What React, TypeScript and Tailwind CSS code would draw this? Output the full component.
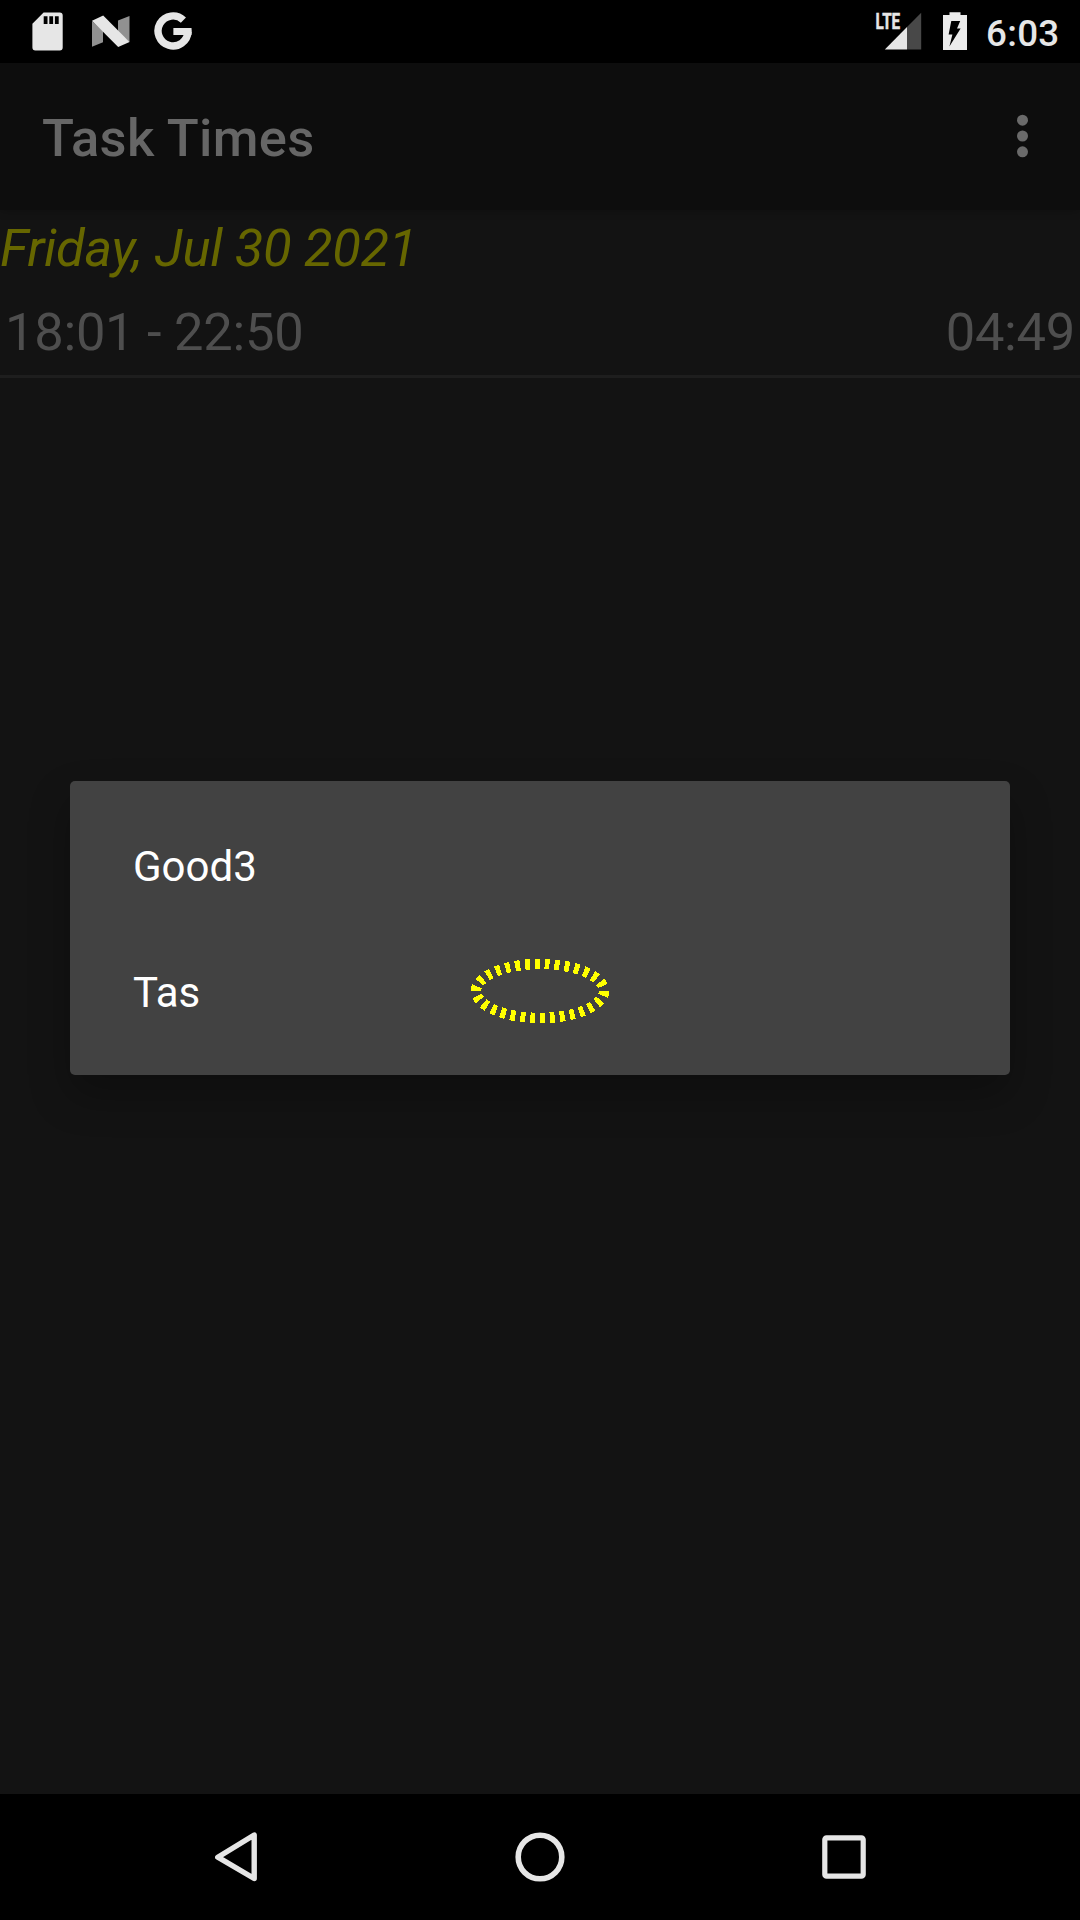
import React from "react";

const SdCardIcon = () => (
  <svg className="h-[63px] w-[32px]" viewBox="32 0 32 63">
    <path d="M43.6 12.4H59.7a3 3 0 0 1 3 3V47.5a3 3 0 0 1-3 3H35.4a3 3 0 0 1-3-3V23.8Z" fill="#e6e6e6" />
    <path d="M43.7 16.3h3.8v7.7h-3.8zM49.3 16.3h3.8v7.7h-3.8zM54.9 16.3h3.8v7.7h-3.8z" fill="#000" />
  </svg>
);

const NougatIcon = () => (
  <svg className="h-[63px] w-[40px]" viewBox="91 0 40 63">
    <path d="M92 21 103 31V42.2L92 46.8ZM118 20.4 129.5 15.9V42L118 34Z" fill="#919191" />
    <path d="M92 20.8 103.2 15.6 129.5 42 118.2 47Z" fill="#e6e6e6" />
  </svg>
);

const GoogleIcon = () => (
  <svg className="h-[63px] w-[40px]" viewBox="154 0 40 63">
    <path d="M183.4 20.1A15 15 0 1 0 188 31.7" fill="none" stroke="#e6e6e6" strokeWidth="7.4" />
    <path d="M173.4 28H191.5Q192 31 191.5 35H173.4Z" fill="#e6e6e6" />
  </svg>
);

const SignalIcon = () => (
  <svg className="h-[63px] w-[48px]" viewBox="875 0 48 63">
    <path d="M907 27V49.5H921.2V12.8Z" fill="#484848" />
    <path d="M884.8 49.5 907 27V49.5Z" fill="#e6e6e6" />
    <text x="875.6" y="29" textLength="24.6" lengthAdjust="spacingAndGlyphs" fill="#e6e6e6" stroke="#e6e6e6" strokeWidth="0.5" className="font-['Roboto'] text-[22px] font-bold">
      LTE
    </text>
  </svg>
);

const BatteryIcon = () => (
  <svg className="h-[63px] w-[26px]" viewBox="942 0 26 63">
    <path d="M943 15H949.5V12.2H960.5V15H967V50H943Z" fill="#ebebeb" />
    <path d="M951.3 21H960.2L957 28.6H960.6L949.4 46.6L952.4 34.6H948.6Z" fill="#000" />
  </svg>
);

const StatusBar = () => (
  <header className="flex h-[63px] items-center bg-black pl-[32px] pr-[21px]">
    <SdCardIcon />
    <div className="ml-[27px]"><NougatIcon /></div>
    <div className="ml-[23px]"><GoogleIcon /></div>
    <div className="ml-auto"><SignalIcon /></div>
    <div className="ml-[19px]"><BatteryIcon /></div>
    <span className="ml-[18px] mt-[5px] w-[73px] text-[36.75px] font-medium leading-[44px] tracking-[0.3px] text-[#e6e6e6]">6:03</span>
  </header>
);

const AppBar = () => (
  <div className="relative flex h-[147px] items-center justify-between bg-[#0d0d0d] pl-[42px] pr-[52px] shadow-[0_2px_8px_rgba(0,0,0,0.2)]">
    <h1 className="mt-[3px] text-[52.5px] font-medium leading-[62px] tracking-[0.33px] text-[#666666]">Task Times</h1>
    <svg className="mb-[1px] h-[44px] w-[11px]" viewBox="0 0 11 44" fill="#6a6a6a">
      <circle cx="5.5" cy="6.2" r="5.5" />
      <circle cx="5.5" cy="22" r="5.5" />
      <circle cx="5.5" cy="37.8" r="5.5" />
    </svg>
  </div>
);

const choices = ["Good3", "Tas"];

const ChoiceDialog = () => (
  <div role="dialog" className="absolute left-[70px] top-[781px] h-[294px] w-[940px] rounded-[5px] bg-[#424242] py-[21px] shadow-[0_20px_40px_rgba(0,0,0,0.27)]">
    {choices.map((name) => (
      <div key={name} className="flex h-[126px] items-center pl-[63px] pt-[4px] text-[42px] leading-[50px] text-white">
        {name}
      </div>
    ))}
    <svg className="absolute left-[395px] top-[173px] h-[74px] w-[150px]" viewBox="465 954 150 74">
      <path d="M604 991A64 27 0 0 1 476 991A64 27 0 0 1 604 991" fill="none" stroke="#ffff00" strokeWidth="10.5" strokeDasharray="4.95 4.95" shapeRendering="crispEdges" />
    </svg>
  </div>
);

const NavBar = () => (
  <nav className="flex h-[126px] items-center bg-black pl-[210px]">
    <svg className="h-[126px] w-[52px]" viewBox="210 1794 52 126">
      <path d="M254.2 1835V1878.5L217.8 1857.2Z" fill="none" stroke="#e6e6e6" strokeWidth="5.4" strokeLinejoin="round" />
    </svg>
    <svg className="ml-[252px] h-[126px] w-[52px]" viewBox="514 1794 52 126">
      <circle cx="540" cy="1857" r="21.8" fill="none" stroke="#e6e6e6" strokeWidth="5.6" />
    </svg>
    <svg className="ml-[252px] h-[126px] w-[52px]" viewBox="818 1794 52 126">
      <rect x="824.8" y="1837.8" width="38.4" height="38.4" rx="1.8" fill="none" stroke="#e6e6e6" strokeWidth="5.2" />
    </svg>
  </nav>
);

export default function App() {
  return (
    <div className="relative flex h-[1920px] w-[1080px] flex-col overflow-hidden bg-[#131313] font-['Roboto',sans-serif]">
      <StatusBar />
      <AppBar />
      <main className="flex-1">
        <h2 className="mt-[7px] text-[52.5px] italic leading-[62px] tracking-[-0.34px] text-[#666600]">Friday, Jul 30 2021</h2>
        <div className="mt-[12px] flex h-[87px] justify-between border-b-[3px] border-[#1e1e1e] px-[5px] pt-[10px] text-[52.5px] leading-[62px] tracking-[-0.28px] text-[#4e4e4e]">
          <span>18:01 - 22:50</span>
          <span>04:49</span>
        </div>
      </main>
      <NavBar />
      <ChoiceDialog />
    </div>
  );
}
